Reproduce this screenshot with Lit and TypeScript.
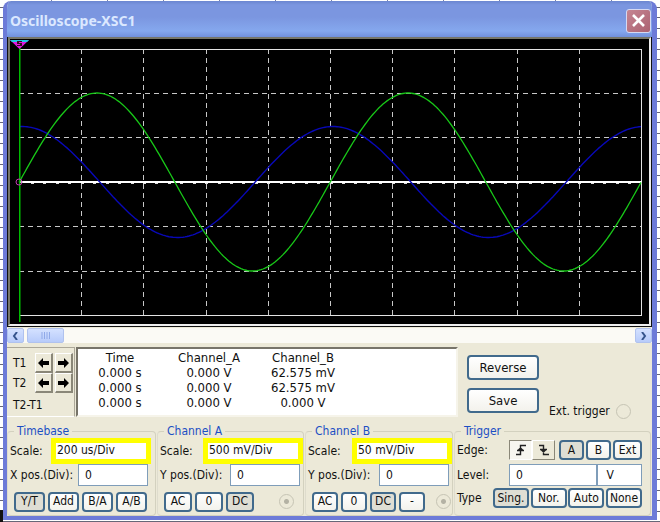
import { LitElement, html, svg, css } from "lit";
import { customElement } from "lit/decorators.js";

const LEFT = 12;
const TOP = 12;
const WIDTH = 622;
const HEIGHT = 266;
const MID = 145;
const PERIOD = 311;

/** Samples one period-locked wave as an SVG polyline. */
const wave = (amplitude: number, peak: number) => {
  const points: string[] = [];
  for (let x = 0; x <= WIDTH; x += 2) {
    const y = MID - amplitude * Math.cos((2 * Math.PI * (x - peak)) / PERIOD);
    points.push(`${x + LEFT},${y.toFixed(1)}`);
  }
  return points.join(" ");
};

const steps = (n: number) => Array.from({ length: n }, (_, i) => i + 1);

@customElement("scope-screen")
class ScopeScreen extends LitElement {
  static styles = css`
    :host { display: block; background: #000; border: 1px solid #111; border-top: 0; }
    .bezel { border: 2px solid #77776a; border-right-color: #eee; border-bottom-color: #eee; }
    svg { display: block; width: 100%; height: auto; }
  `;
  render() {
    return html`<div class="bezel"><svg viewBox="3 2 639 285" role="img" aria-label="Waveforms">
      <g stroke="#c8c8c8" stroke-width="1" stroke-dasharray="5 4" shape-rendering="crispEdges">
        ${steps(9).map((i) => { const x = Math.round(LEFT + i * 62.2) + 0.5;
          return svg`<line x1=${x} x2=${x} y1=${TOP} y2=${TOP + HEIGHT}></line>`; })}
        ${[1, 2, 4, 5].map((i) => { const y = Math.floor(TOP + i * 44.4) + 0.5;
          return svg`<line x1=${LEFT} x2=${LEFT + WIDTH} y1=${y} y2=${y}></line>`; })}
      </g>
      <g shape-rendering="crispEdges" fill="none">
        <rect x="12.5" y="12.5" width="622" height="266" stroke="#e4e4e4"></rect>
        <line x1="12" x2="635" y1="145" y2="145" stroke="#fff" stroke-width="2"></line>
        <line x1="24" x2="635" y1="146.5" y2="146.5" stroke="#ddd" stroke-dasharray="3 9.44"></line>
      </g>
      <polyline points=${wave(55.5, 3)} fill="none" stroke="#0808b8" stroke-width="1.4"></polyline>
      <polyline points=${wave(89, 78)} fill="none" stroke="#18c818" stroke-width="1.3"></polyline>
      <rect x="12" y="8" width="1.5" height="277" fill="#0b0"></rect>
      <circle cx="12" cy="145" r="3" fill="none" stroke="#c03cb0"></circle>
      <path d="M3 3H22L12.5 12Z" fill="#e016e0"></path>
      <path d="M3 3H22L20 5H5Z" fill="#20c8e0"></path>
      <path d="M10 4h5v1h-3v1h3v3h-5v-1h3v-1h-3z" fill="#301020"></path>
    </svg></div>`;
  }
}

@customElement("app-root")
class AppRoot extends LitElement {
  static styles = css`
    :host {
      display: block;
      box-sizing: border-box;
      min-height: 100vh;
      padding: 1px 3px 2px;
      background:
        linear-gradient(90deg, #111 3px, transparent 3px) 0 100% / 100% 12px no-repeat,
        repeating-linear-gradient(90deg, #fff 0 51px, #7780aa 51px 52px, #fff 52px 56px) 0 0 / 100% 2px no-repeat,
        repeating-linear-gradient(#fff 0 7px, #667 7px 8px, #fff 8px 17px, #667 17px 18px, #fff 18px 21px);
      font: 12px/15px "DejaVu Sans Condensed", "DejaVu Sans", sans-serif;
      color: #111;
    }
    * { box-sizing: border-box; }
    button, input, select { font: inherit; color: inherit; margin: 0; }
    .window {
      background: #ece9d8;
      border: solid #6d7bd8;
      border-width: 0 5px 4px 4px;
      border-radius: 8px 8px 0 0;
      overflow: hidden;
    }
    .title {
      display: flex;
      align-items: center;
      justify-content: space-between;
      height: 36px;
      margin: 0 -5px 0 -4px;
      padding: 3px 6px 0 7px;
      background: linear-gradient(#6b86d0, #7b96e0 4px, #7b96e0 16px, #85a8ee 30px, #7190dc);
      color: #dbe8ff;
    }
    h1 { margin: 0; font: bold 14px/20px "Noto Sans", sans-serif; }
    .close {
      display: flex;
      width: 25px;
      height: 24px;
      padding: 0;
      border: 1px solid #d5d9f2;
      border-radius: 3px;
      background: linear-gradient(135deg, #c58592, #ac6272);
    }
    .close svg { margin: auto; }
    .scroll { display: flex; align-items: stretch; gap: 3px; height: 15px; margin-top: 1px; background: #fbfaf5; }
    .scroll button { padding: 0; border: 1px solid #b0c2ee; border-radius: 2px; background: linear-gradient(#d4e1ff, #b7cbfa); display: flex; }
    .scroll svg { margin: auto; }
    .arrow { width: 17px; }
    .thumb { width: 37px; }
    .arrow.end { margin-left: auto; }
    .readout { display: flex; height: 70px; margin-top: 4px; }
    .cursors {
      display: grid;
      grid-template-columns: 22px 20px 20px;
      grid-template-rows: 20px 20px 24px;
      flex: none;
      width: 68px;
      padding: 5px 0 0 6px;
      align-items: center;
      border: 1px solid #aca899;
      border-left: 0;
      border-bottom-color: #fff;
    }
    .whole { grid-column: 1 / -1; }
    .step {
      display: flex;
      width: 18px;
      height: 20px;
      padding: 0;
      background: #ece9d8;
      border: 1px solid #fff;
      border-right: 2px solid #8a8778;
      border-bottom: 2px solid #8a8778;
    }
    .step svg { margin: auto; }
    .sheet {
      flex: 1;
      margin-left: 1px;
      padding-top: 1px;
      background: #fff;
      border: 2px solid #777469;
      border-right-color: #f6f4ea;
      border-bottom-color: #f6f4ea;
    }
    table { border-collapse: collapse; font-size: 13px; }
    th, td { width: 94px; padding: 0; text-align: center; font-weight: normal; line-height: 15px; }
    th:first-child, td:first-child { width: 84px; }
    .actions { flex: none; width: 194px; display: flex; align-items: flex-end; gap: 10px; padding: 0 0 4px 9px; }
    .stack { display: flex; flex-direction: column; gap: 8px; }
    .button {
      height: 20px;
      padding: 0;
      border: 2px solid #416a8c;
      border-radius: 4px;
      background: linear-gradient(#fff, #f3f2ec);
      text-align: center;
      line-height: 15px;
      white-space: nowrap;
    }
    .on { background: #dfded4; }
    .large { width: 72px; height: 25px; font-size: 13px; }
    .external { display: flex; align-items: center; gap: 6px; white-space: nowrap; margin-bottom: -6px; }
    .port {
      appearance: none;
      flex: none;
      width: 15px;
      height: 15px;
      margin: 0;
      border: 1px solid #c6c4b4;
      border-radius: 50%;
    }
    .wired { background: radial-gradient(circle, #b4b2a4 2px, transparent 3px); }
    .groups { display: grid; grid-template-columns: 150fr 148fr 149fr 198fr; margin-top: 7px; }
    fieldset {
      min-width: 0;
      margin: 0 1px 0 0;
      padding: 0 4px 3px 2px;
      border: 1px solid #d3d1bf;
      border-radius: 4px;
      border-left-color: #dedccd;
    }
    .channel { padding-right: 0; }
    legend { margin-left: 4px; padding: 0 3px; color: #1c4fc4; line-height: 14px; }
    .row { display: flex; align-items: center; justify-content: space-between; }
    .row label, .row span { white-space: nowrap; }
    .scale {
      appearance: none;
      width: 100px;
      height: 26px;
      padding: 0 0 2px 1px;
      border: 5px solid #ff0;
      border-radius: 0;
      background: #fff;
      line-height: 14px;
    }
    .field {
      height: 22px;
      min-width: 0;
      width: 70px;
      padding: 0 6px;
      border: 1px solid #7f9db9;
      background: #fff;
    }
    .position { margin-right: 3px; }
    .toggles { display: flex; gap: 3px; margin-top: 5px; padding: 0 9px 0 4px; height: 21px; align-items: center; }
    .toggles .button { width: 28px; flex: none; }
    .toggles .wide { width: 31px; }
    .toggles .port { margin-left: auto; }
    .narrow { padding-right: 1px; }
    .narrow .button { width: 26px; }
    .trigger { display: grid; grid-template-columns: 52px minmax(0, 1fr); row-gap: 2px; align-items: center; padding-right: 4px; }
    .set { display: flex; gap: 2px; align-items: center; height: 24px; }
    .edges { display: flex; flex: none; margin-right: 2px; }
    .edge { display: flex; width: 23px; height: 20px; padding: 0; background: #ece9d8; border: 1px solid #fff; border-right-color: #8a8778; border-bottom-color: #8a8778; }
    .edge.down { background: #f7f6f0; border-color: #8a8778 #fff #fff #8a8778; }
    .edge svg { margin: auto; }
    .set .button { flex: 1 1 24px; }
    .set .ext { flex-basis: 28px; }
    .level { display: flex; }
    .level .field:first-child { flex: 98; }
    .level .field:last-child { flex: 35; padding: 0 8px; }
    .types { display: flex; justify-content: space-between; margin-left: -16px; }
    .types .button { width: 36px; }
  `;

  arrow(flip: boolean) {
    return html`<svg width="11" height="10" viewBox="0 0 11 10" aria-hidden="true">
      <path d=${flip ? "M11 5L6 0V3H0V7H6V10Z" : "M0 5L5 0V3H11V7H5V10Z"} fill="#000"></path></svg>`;
  }

  chevron(d: string) {
    return html`<svg width="7" height="8" viewBox="0 0 7 8" aria-hidden="true">
      <path d=${d} fill="none" stroke="#35548c" stroke-width="2"></path></svg>`;
  }

  cursor(name: string) {
    return html`<span>${name}</span>
      <button class="step" aria-label="${name} left">${this.arrow(false)}</button>
      <button class="step" aria-label="${name} right">${this.arrow(true)}</button>`;
  }

  group(id: string, title: string, scale: string, axis: string, controls: unknown) {
    return html`<fieldset class=${axis === "Y" ? "channel" : "time"}>
      <legend>${title}</legend>
      <div class="row">
        <label for="${id}-scale">Scale:</label>
        <select class="scale" id="${id}-scale"><option>${scale}</option></select>
      </div>
      <div class="row">
        <label for="${id}-pos">${axis} pos.(Div):</label>
        <input class="field position" id="${id}-pos" value="0">
      </div>
      ${controls}
    </fieldset>`;
  }

  buttons(names: string[], active: string, extra = "") {
    return names.map((n) => html`<button class="button ${n === active ? "on" : ""} ${extra}">${n}</button>`);
  }

  render() {
    const rows = [
      ["0.000 s", "0.000 V", "62.575 mV"],
      ["0.000 s", "0.000 V", "62.575 mV"],
      ["0.000 s", "0.000 V", "0.000 V"],
    ];
    return html`<main class="window">
      <header class="title">
        <h1>Oscilloscope-XSC1</h1>
        <button class="close" aria-label="Close"><svg width="13" height="13" viewBox="0 0 13 13" aria-hidden="true">
          <path d="M1 1L12 12M12 1L1 12" stroke="#fff" stroke-width="2.6"></path></svg></button>
      </header>
      <scope-screen></scope-screen>
      <div class="scroll">
        <button class="arrow" aria-label="Scroll left">${this.chevron("M5 0L2 4L5 8")}</button>
        <button class="thumb" aria-label="Scroll position"><svg width="9" height="7" viewBox="0 0 9 7" aria-hidden="true">
          <path d="M1 0V7M3.5 0V7M6 0V7M8.5 0V7" stroke="#8fa9e8"></path></svg></button>
        <button class="arrow end" aria-label="Scroll right">${this.chevron("M2 0L5 4L2 8")}</button>
      </div>
      <section class="readout">
        <div class="cursors">
          ${this.cursor("T1")}${this.cursor("T2")}
          <span class="whole">T2-T1</span>
        </div>
        <div class="sheet"><table>
          <thead><tr><th>Time</th><th>Channel_A</th><th>Channel_B</th></tr></thead>
          <tbody>${rows.map((r) => html`<tr>${r.map((c) => html`<td>${c}</td>`)}</tr>`)}</tbody>
        </table></div>
        <div class="actions">
          <div class="stack">
            <button class="button large">Reverse</button>
            <button class="button large">Save</button>
          </div>
          <label class="external">Ext. trigger <input class="port" type="radio" name="external"></label>
        </div>
      </section>
      <section class="groups">
        ${this.group("time", "Timebase", "200 us/Div", "X", html`<div class="toggles">
          ${this.buttons(["Y/T", "Add", "B/A", "A/B"], "Y/T", "wide")}</div>`)}
        ${this.group("a", "Channel A", "500 mV/Div", "Y", html`<div class="toggles">
          ${this.buttons(["AC", "0", "DC"], "DC")}
          <input class="port wired" type="radio" name="a" aria-label="Channel A input"></div>`)}
        ${this.group("b", "Channel B", "50 mV/Div", "Y", html`<div class="toggles narrow">
          ${this.buttons(["AC", "0", "DC", "-"], "DC")}
          <input class="port wired" type="radio" name="b" aria-label="Channel B input"></div>`)}
        <fieldset>
          <legend>Trigger</legend>
          <div class="trigger">
            <span>Edge:</span>
            <div class="set">
              <div class="edges">
                <button class="edge down" aria-label="Rising edge"><svg width="12" height="12" viewBox="0 0 12 12" aria-hidden="true">
                  <path d="M1 10.5H5.5V1.5H11M2 6.5H9M3 6.5L5.5 4L8 6.5" fill="none" stroke="#222" stroke-width="1.4"></path></svg></button>
                <button class="edge" aria-label="Falling edge"><svg width="12" height="12" viewBox="0 0 12 12" aria-hidden="true">
                  <path d="M1 1.5H5.5V10.5H11M2 5.5H9M3 5.5L5.5 8L8 5.5" fill="none" stroke="#222" stroke-width="1.4"></path></svg></button>
              </div>
              ${this.buttons(["A", "B"], "A")}
              <button class="button ext">Ext</button>
            </div>
            <label for="level">Level:</label>
            <div class="level">
              <input class="field" id="level" value="0">
              <input class="field" aria-label="Level unit" value="V">
            </div>
            <span>Type</span>
            <div class="types">${this.buttons(["Sing.", "Nor.", "Auto", "None"], "Sing.")}</div>
          </div>
        </fieldset>
      </section>
    </main>`;
  }
}
